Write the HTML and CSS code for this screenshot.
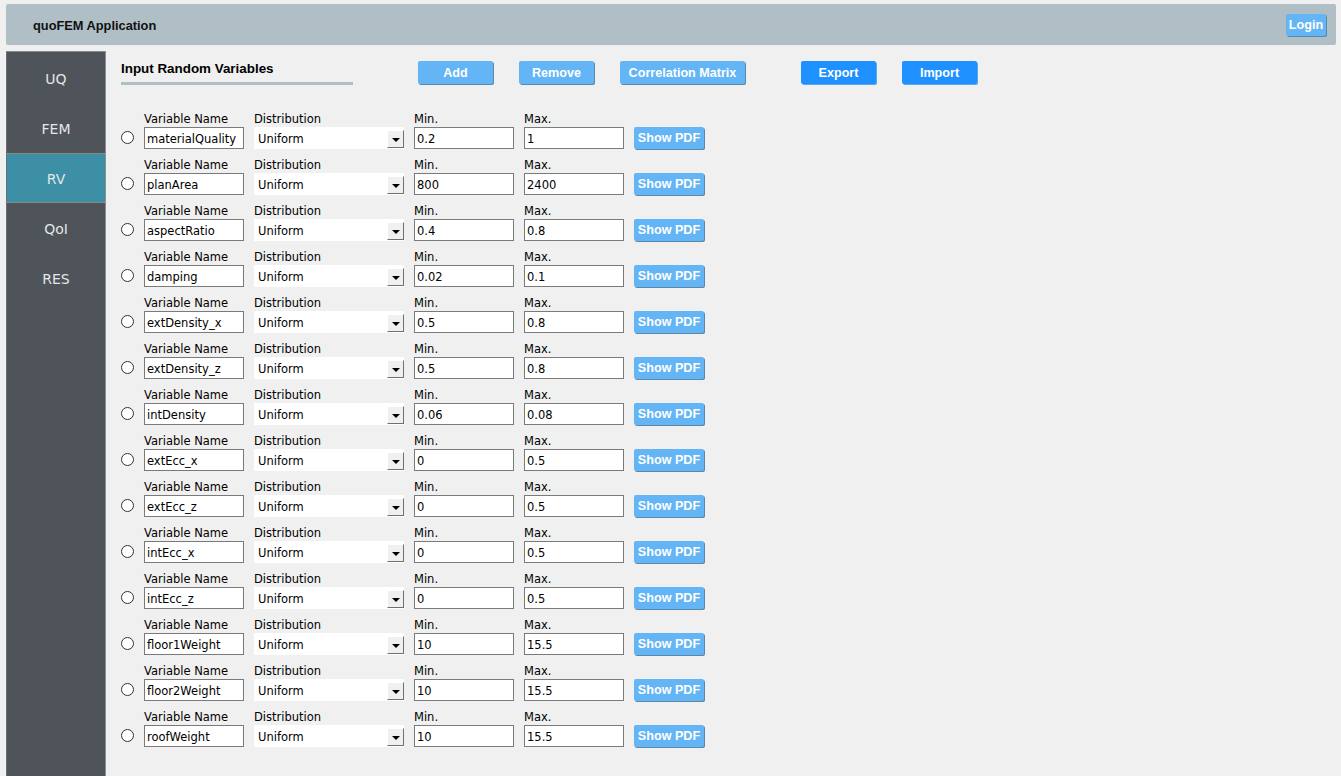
FILE: index.html
```html
<!DOCTYPE html>
<html>
<head>
<meta charset="utf-8">
<title>quoFEM Application</title>
<link rel="stylesheet" href="styles.css">
</head>
<body>
<header class="topbar">
  <span class="app-title">quoFEM Application</span>
  <button class="btn btn-light login">Login</button>
</header>
<div class="main">
  <nav class="sidebar">
    <div class="nav-item">UQ</div>
    <div class="nav-item">FEM</div>
    <div class="nav-item active">RV</div>
    <div class="nav-item">QoI</div>
    <div class="nav-item">RES</div>
  </nav>
  <section class="content">
    <div class="toolbar">
      <div class="title-block">
        <div class="title">Input Random Variables</div>
        <div class="title-rule"></div>
      </div>
      <div class="actions">
        <button class="btn btn-light w75">Add</button>
        <button class="btn btn-light w75">Remove</button>
        <button class="btn btn-light w125">Correlation Matrix</button>
        <button class="btn btn-dark w75 gap-big">Export</button>
        <button class="btn btn-dark w75">Import</button>
      </div>
    </div>
    <div class="rows" id="rows"></div>
  </section>
</div>
<script src="app.js"></script>
</body>
</html>
```

FILE: app.js
```js
var data = [
  ["materialQuality", "0.2", "1"],
  ["planArea", "800", "2400"],
  ["aspectRatio", "0.4", "0.8"],
  ["damping", "0.02", "0.1"],
  ["extDensity_x", "0.5", "0.8"],
  ["extDensity_z", "0.5", "0.8"],
  ["intDensity", "0.06", "0.08"],
  ["extEcc_x", "0", "0.5"],
  ["extEcc_z", "0", "0.5"],
  ["intEcc_x", "0", "0.5"],
  ["intEcc_z", "0", "0.5"],
  ["floor1Weight", "10", "15.5"],
  ["floor2Weight", "10", "15.5"],
  ["roofWeight", "10", "15.5"]
];
var rows = document.getElementById("rows");
data.forEach(function (d) {
  var r = document.createElement("div");
  r.className = "row";
  r.innerHTML =
    '<span class="radio"></span>' +
    '<div class="field f-name"><label>Variable Name</label><div class="input">' + d[0] + '</div></div>' +
    '<div class="field f-dist"><label>Distribution</label><div class="combo"><span class="combo-text">Uniform</span><span class="combo-arrow"><i></i></span></div></div>' +
    '<div class="field f-num"><label>Min.</label><div class="input">' + d[1] + '</div></div>' +
    '<div class="field f-num"><label>Max.</label><div class="input">' + d[2] + '</div></div>' +
    '<button class="btn btn-light pdf">Show PDF</button>';
  rows.appendChild(r);
});
```

FILE: styles.css
```css
html, body {
  margin: 0;
  padding: 0;
  background: #f0f0f0;
  font-family: "DejaVu Sans", Tahoma, sans-serif;
  font-size: 11.5px;
  color: #000;
  height: 100%;
  overflow: hidden;
}

.topbar {
  margin: 4px 5px 0 6px;
  height: 41px;
  background: #b0bec5;
  border-radius: 2px;
  display: flex;
  align-items: center;
  justify-content: space-between;
  padding: 0 10px 0 27px;
  box-sizing: border-box;
}

.app-title {
  font-family: "Liberation Sans", Arial, sans-serif;
  font-weight: bold;
  font-size: 12.8px;
  color: #111;
  padding-top: 2px;
}

.btn {
  border: none;
  border-radius: 2px;
  color: #fff;
  font-family: "Liberation Sans", Arial, sans-serif;
  font-weight: bold;
  font-size: 12.6px;
  height: 23px;
  padding: 0;
  cursor: pointer;
}

.btn-light {
  background: #64b5f6;
  box-shadow: 1px 1px 0 #5b87a8;
}

.btn-dark {
  background: #1e90ff;
  box-shadow: 1px 1px 0 #5aa7e8;
}

.login {
  width: 40px;
  height: 22px;
}

.main {
  display: flex;
  margin-top: 6px;
  height: calc(100% - 51px);
}

.sidebar {
  width: 100px;
  margin-left: 6px;
  box-sizing: border-box;
  background: #4f535a;
  border-top: 1px solid #868b92;
  border-left: 1px solid #6b7077;
  border-right: 1px solid #8a8f96;
  padding-top: 1px;
  flex: none;
}

.nav-item {
  height: 50px;
  display: flex;
  align-items: center;
  justify-content: center;
  color: #e4e6e8;
  font-size: 14px;
  padding-top: 1px;
  box-sizing: border-box;
}

.nav-item.active {
  background: #3c8fa5;
  border-top: 1px dotted #c9855a;
  border-bottom: 1px dotted #c9855a;
}

.content {
  flex: 1;
  padding-left: 15px;
}

.toolbar {
  display: flex;
  align-items: flex-start;
  padding-top: 10px;
}

.title-block {
  width: 232px;
}

.title {
  font-family: "Liberation Sans", Arial, sans-serif;
  font-weight: bold;
  font-size: 13.4px;
  padding-top: 1px;
  height: 20px;
  line-height: 14px;
}

.title-rule {
  height: 3px;
  background: #b0bec5;
}

.actions {
  display: flex;
  gap: 26px;
  margin-left: 65px;
}

.w75 { width: 75px; }
.w125 { width: 125px; }
.gap-big { margin-left: 30px; }

.rows {
  padding-top: 26px;
  display: flex;
  flex-direction: column;
  gap: 8px;
}

.row {
  display: flex;
  align-items: flex-end;
  height: 38px;
}

.radio {
  width: 11px;
  height: 11px;
  border: 1px solid #333;
  border-radius: 50%;
  background: #fff;
  margin-bottom: 5px;
  margin-right: 10px;
  flex: none;
}

.field {
  display: flex;
  flex-direction: column;
  margin-right: 10px;
}

.field label {
  height: 16px;
  line-height: 16px;
  white-space: nowrap;
}

.input {
  height: 22px;
  box-sizing: border-box;
  border: 1px solid #7a7a7a;
  background: #fff;
  padding: 2px 2px 0;
  line-height: 18px;
  white-space: nowrap;
  overflow: hidden;
}

.f-name .input { width: 100px; }
.f-num .input { width: 100px; }

.combo {
  width: 150px;
  height: 22px;
  box-sizing: border-box;
  background: #fff;
  display: flex;
  align-items: stretch;
  padding: 1px 0 1px 4px;
}

.combo-text {
  flex: 1;
  padding-top: 2px;
  line-height: 18px;
}

.combo-arrow {
  width: 17px;
  box-sizing: border-box;
  background: #f0f0f0;
  border-top: 1px solid #fff;
  border-left: 1px solid #fff;
  border-right: 1px solid #707070;
  border-bottom: 1px solid #707070;
  display: flex;
  align-items: center;
  justify-content: center;
  margin-top: 2px;
}

.combo-arrow i {
  width: 0;
  height: 0;
  border-left: 4px solid transparent;
  border-right: 4px solid transparent;
  border-top: 4px solid #000;
  margin-top: 1px;
}

.pdf {
  width: 70px;
  height: 22px;
}
```
